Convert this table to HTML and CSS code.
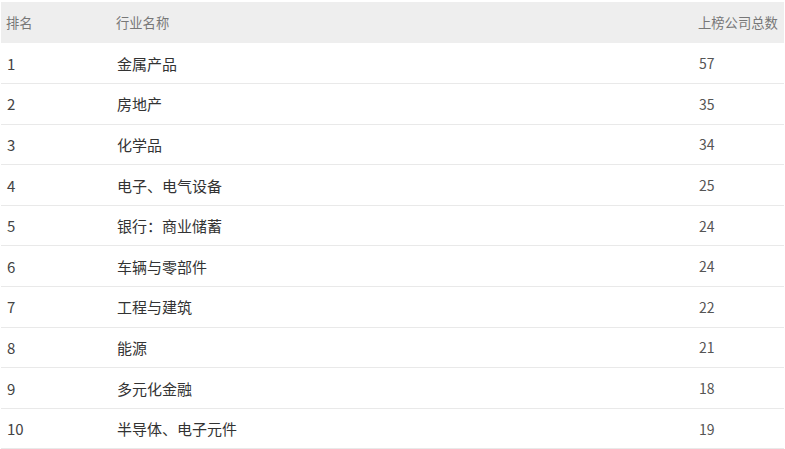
FILE: index.html
```html
<!DOCTYPE html>
<html lang="zh">
<head>
<meta charset="utf-8">
<link rel="stylesheet" href="styles.css">
</head>
<body>
<div class="wrap">
<table class="rank">
<thead>
<tr><th class="c1">排名</th><th class="c2">行业名称</th><th class="c3">上榜公司总数</th></tr>
</thead>
<tbody>
<tr><td>1</td><td class="name">金属产品</td><td class="num">57</td></tr>
<tr><td>2</td><td class="name">房地产</td><td class="num">35</td></tr>
<tr><td>3</td><td class="name">化学品</td><td class="num">34</td></tr>
<tr><td>4</td><td class="name">电子、电气设备</td><td class="num">25</td></tr>
<tr><td>5</td><td class="name">银行：商业储蓄</td><td class="num">24</td></tr>
<tr><td>6</td><td class="name">车辆与零部件</td><td class="num">24</td></tr>
<tr><td>7</td><td class="name">工程与建筑</td><td class="num">22</td></tr>
<tr><td>8</td><td class="name">能源</td><td class="num">21</td></tr>
<tr><td>9</td><td class="name">多元化金融</td><td class="num">18</td></tr>
<tr><td>10</td><td class="name">半导体、电子元件</td><td class="num">19</td></tr>
</tbody>
</table>
</div>
</body>
</html>
```

FILE: styles.css
```css
html, body {
  margin: 0;
  padding: 0;
  background: #fff;
}
.wrap {
  padding: 2px 1px 0 1px;
}
.rank {
  width: 783px;
  border-collapse: collapse;
  table-layout: fixed;
  font-family: "Noto Sans CJK SC", "Noto Sans", sans-serif;
}
.rank th {
  background: #eeeeee;
  color: #777;
  font-weight: normal;
  font-size: 13.3px;
  text-align: left;
  height: 41px;
  padding: 0 0 0 5px;
  box-sizing: border-box;
}
.rank .c1 { width: 110px; }
.rank .c3 { width: 91px; }
.rank td {
  height: 40.6px;
  box-sizing: border-box;
  padding: 0 0 0 6px;
  font-size: 15px;
  color: #444;
  border-bottom: 1px solid #e9e9e9;
  vertical-align: middle;
}
.rank td.name {
  font-size: 15px;
  color: #333;
}
.rank td.num {
  font-size: 14px;
  color: #555;
}
```
